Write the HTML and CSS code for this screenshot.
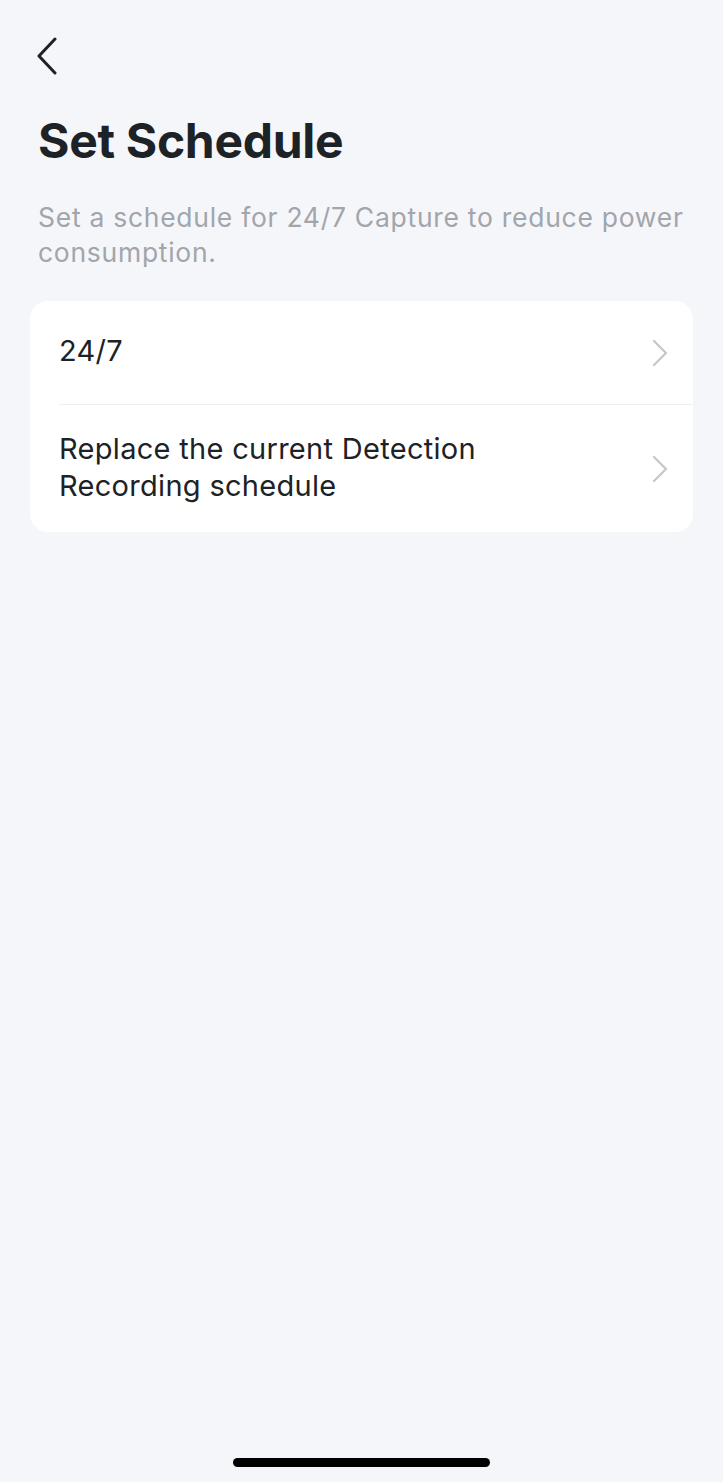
FILE: index.html
```html
<!DOCTYPE html>
<html lang="en">
<head>
    <meta charset="UTF-8">
    <meta name="viewport" content="width=device-width, initial-scale=1.0">
    <title>Set Schedule</title>
    <link rel="stylesheet" href="styles.css">
</head>
<body>
<div class="screen">
    <!-- Top bar -->
    <div class="top-bar">
        <button class="back-btn" aria-label="Back">
            <svg width="22" height="38" viewBox="0 0 22 38">
                <path d="M19 2 L3 19 L19 36" fill="none" stroke="#1d2226" stroke-width="3" stroke-linecap="round" stroke-linejoin="round"/>
            </svg>
        </button>
    </div>

    <!-- Header -->
    <div class="header">
        <h1>Set Schedule</h1>
        <p class="subtitle">Set a schedule for 24/7 Capture to reduce power consumption.</p>
    </div>

    <!-- Options -->
    <div class="card">
        <a class="row" href="#">
            <span class="row-label">24/7</span>
            <svg class="chevron" width="18" height="28" viewBox="0 0 18 28">
                <path d="M3 2 L15 14 L3 26" fill="none" stroke="#c5c6c9" stroke-width="2.2" stroke-linecap="round" stroke-linejoin="round"/>
            </svg>
        </a>
        <a class="row" href="#">
            <span class="row-label">Replace the current Detection Recording schedule</span>
            <svg class="chevron" width="18" height="28" viewBox="0 0 18 28">
                <path d="M3 2 L15 14 L3 26" fill="none" stroke="#c5c6c9" stroke-width="2.2" stroke-linecap="round" stroke-linejoin="round"/>
            </svg>
        </a>
    </div>

    <div class="spacer"></div>

    <!-- Home indicator -->
    <div class="home-bar"></div>
</div>
</body>
</html>
```

FILE: styles.css
```css
/* General */
body {
    margin: 0;
    font-family: Inter, "Noto Sans", Arial, sans-serif;
    color: #1d2226;
    background-color: #f5f6fa;
}

.screen {
    display: flex;
    flex-direction: column;
    min-height: 1482px;
    box-sizing: border-box;
}

/* Top bar */
.top-bar {
    height: 96px;
    padding: 37px 0 0 36px;
    box-sizing: border-box;
}

.back-btn {
    background: none;
    border: none;
    padding: 0;
    cursor: pointer;
    display: block;
}

/* Header */
.header {
    padding: 0 28px 0 38px;
}

.header h1 {
    margin: 0;
    font-size: 48px;
    font-weight: 700;
    letter-spacing: -0.3px;
    line-height: 90px;
}

.subtitle {
    margin: 14px 0 0;
    font-size: 26.5px;
    line-height: 35px;
    letter-spacing: 0.72px;
    color: #a2a5aa;
}

/* Card with options */
.card {
    margin: 31px 30px 0;
    background-color: #ffffff;
    border-radius: 18px;
    overflow: hidden;
}

.row {
    display: flex;
    align-items: center;
    justify-content: space-between;
    text-decoration: none;
    color: #1d2226;
    margin-left: 29px;
    padding-right: 24px;
    min-height: 103px;
    box-sizing: border-box;
}

.row + .row {
    border-top: 1px solid #eeeff2;
    min-height: 128px;
}

.row-label {
    font-size: 29px;
    line-height: 37px;
    letter-spacing: 0.3px;
    max-width: 460px;
    padding-bottom: 4px;
}

.chevron {
    flex-shrink: 0;
}

.spacer {
    flex: 1;
}

/* Home indicator */
.home-bar {
    align-self: center;
    width: 257px;
    height: 9px;
    border-radius: 5px;
    background-color: #000000;
    margin-bottom: 15px;
}
```
